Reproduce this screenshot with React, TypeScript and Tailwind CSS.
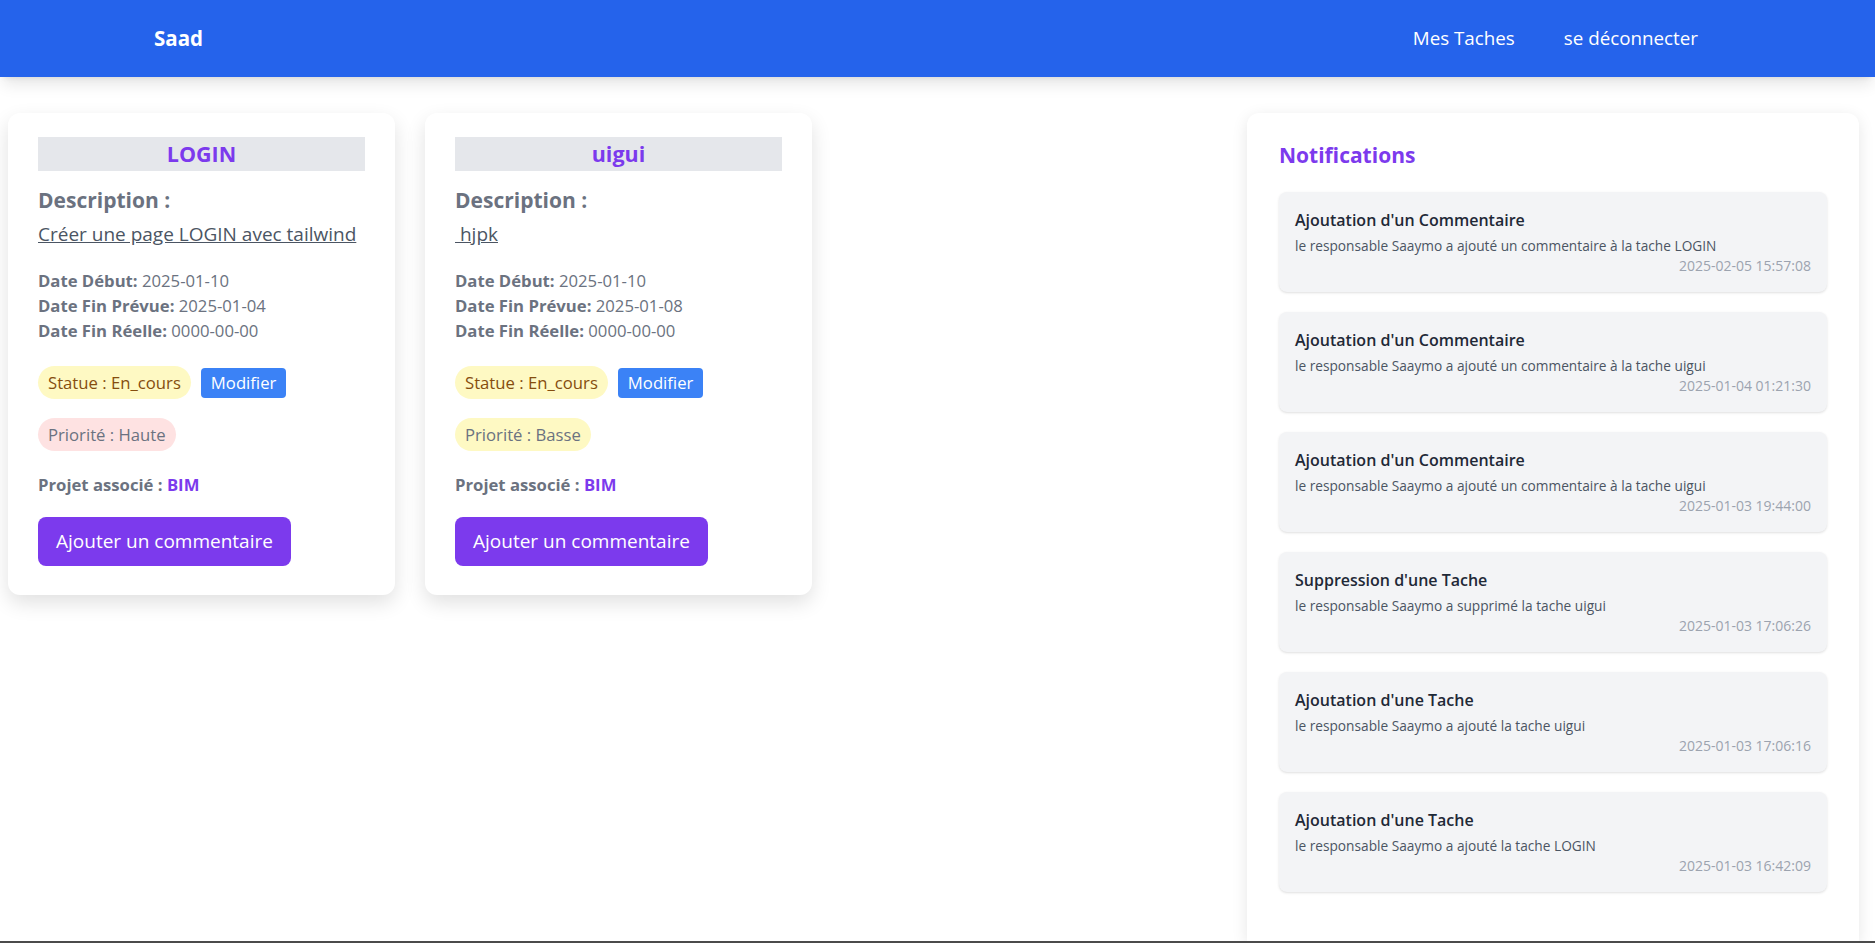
import React from 'react'

type Task = {
  title: string,
  description: string,
  debut: string,
  prevue: string,
  reelle: string,
  statut: string,
  priorite: string,
  projet: string
}

type Notif = {
  title: string,
  message: string,
  date: string
}

const tasks: Task[] = [
  { title: 'LOGIN', description: 'Créer une page LOGIN avec tailwind', debut: '2025-01-10', prevue: '2025-01-04', reelle: '0000-00-00', statut: 'En_cours', priorite: 'Haute', projet: 'BIM' },
  { title: 'uigui', description: ' hjpk', debut: '2025-01-10', prevue: '2025-01-08', reelle: '0000-00-00', statut: 'En_cours', priorite: 'Basse', projet: 'BIM' },
]

const notifs: Notif[] = [
  { title: "Ajoutation d'un Commentaire", message: 'le responsable Saaymo a ajouté un commentaire à la tache LOGIN', date: '2025-02-05 15:57:08' },
  { title: "Ajoutation d'un Commentaire", message: 'le responsable Saaymo a ajouté un commentaire à la tache uigui', date: '2025-01-04 01:21:30' },
  { title: "Ajoutation d'un Commentaire", message: 'le responsable Saaymo a ajouté un commentaire à la tache uigui', date: '2025-01-03 19:44:00' },
  { title: "Suppression d'une Tache", message: 'le responsable Saaymo a supprimé la tache uigui', date: '2025-01-03 17:06:26' },
  { title: "Ajoutation d'une Tache", message: 'le responsable Saaymo a ajouté la tache uigui', date: '2025-01-03 17:06:16' },
  { title: "Ajoutation d'une Tache", message: 'le responsable Saaymo a ajouté la tache LOGIN', date: '2025-01-03 16:42:09' },
]

const TaskCard: React.FC<{ task: Task }> = ({ task }) => {
  return (
    <div className="w-[387px] bg-white rounded-xl shadow-[0_8px_20px_rgba(0,0,0,0.12)] px-[30px] pt-6 pb-[29px]">
      <h2 className="bg-[#e5e7eb] text-center text-[21.5px] font-bold text-[#7c3aed] h-[34px] leading-[34px]">{task.title}</h2>
      <h3 className="text-[21px] font-bold text-[#6b7280] mt-[15px] leading-7">Description :</h3>
      <p className="text-[19px] text-[#4b5563] underline mt-[6px] leading-7 whitespace-pre">{task.description}</p>
      <div className="mt-[20px] text-[16.7px] leading-[25px] text-[#6b7280]">
        <p><span className="font-bold">Date Début:</span> {task.debut}</p>
        <p><span className="font-bold">Date Fin Prévue:</span> {task.prevue}</p>
        <p><span className="font-bold">Date Fin Réelle:</span> {task.reelle}</p>
      </div>
      <div className="flex items-center gap-[10px] mt-[23px] text-[16.7px]">
        <span className="bg-[#fef9c3] text-[#854d0e] rounded-full h-[33px] px-[10px] flex items-center">Statue : {task.statut}</span>
        <button className="bg-[#3b82f6] text-white rounded h-[30px] px-[10px]">Modifier</button>
      </div>
      <div className="mt-[19px] flex text-[16.7px]">
        <span className={`${task.priorite === 'Haute' ? 'bg-[#fee2e2]' : 'bg-[#fef9c3]'} text-[#6b7280] rounded-full h-[33px] px-[10px] flex items-center`}>Priorité : {task.priorite}</span>
      </div>
      <p className="mt-[22px] text-[16.7px] font-bold text-[#6b7280] leading-6">Projet associé : <span className="text-[#7c3aed]">{task.projet}</span></p>
      <button className="mt-[20px] bg-[#7c3aed] text-white text-[19px] rounded-lg h-[49px] px-[18px]">Ajouter un commentaire</button>
    </div>
  )
}

const App: React.FC = () => {
  return (
    <div className="h-screen flex flex-col overflow-hidden bg-white border-b-2 border-[#4b4b4b]" style={{ fontFamily: '"Open Sans", "Noto Sans", sans-serif' }}>
      <nav className="h-[77px] shrink-0 bg-[#2563eb] shadow-lg flex items-center justify-between pl-[154px] pr-[177px] relative z-10">
        <span className="text-white text-[20.5px] font-bold">Saad</span>
        <div className="flex items-center gap-[49px] text-white text-[18.8px]">
          <a>Mes Taches</a>
          <a>se déconnecter</a>
        </div>
      </nav>
      <main className="flex-1 flex justify-between pt-[36px] pl-2 pr-4 min-h-0">
        <div className="flex items-start gap-[30px]">
          {tasks.map((t, i) => <TaskCard key={i} task={t} />)}
        </div>
        <aside className="w-[612px] bg-white shadow-[0_4px_16px_rgba(0,0,0,0.1)] rounded-t-xl px-8 pt-[26px]">
          <h2 className="text-[21px] font-bold text-[#7c3aed] leading-8 mb-[21px]">Notifications</h2>
          <div className="flex flex-col gap-5">
            {notifs.map((n, i) => (
              <div key={i} className="bg-[#f3f4f6] rounded-lg shadow-sm p-4">
                <p className="text-base font-semibold text-[#1f2937] leading-6">{n.title}</p>
                <p className="text-[13.7px] text-[#4b5563] mt-1 leading-5">{n.message}</p>
                <p className="text-sm text-[#9ca3af] text-right leading-5">{n.date}</p>
              </div>
            ))}
          </div>
        </aside>
      </main>
    </div>
  )
}

export default App
